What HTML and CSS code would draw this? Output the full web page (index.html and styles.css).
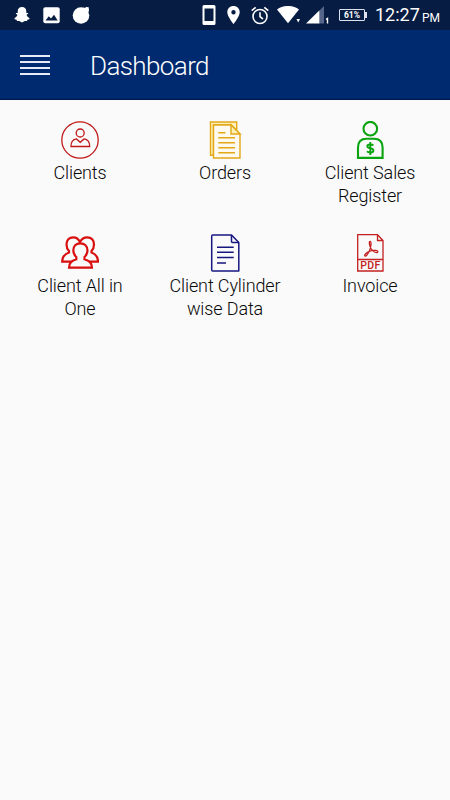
FILE: index.html
```
<!DOCTYPE html>
<html lang="en">
<head>
    <meta charset="UTF-8">
    <meta name="viewport" content="width=device-width, initial-scale=1.0">
    <title>Dashboard</title>
    <link rel="stylesheet" href="styles.css">
</head>
<body>

    <div class="status-bar">
        <div class="status-left">
            <svg width="16" height="16" viewBox="0 0 16 16" fill="#fff"><path d="M8 0C5.200 0 3.700 1.800 3.700 4.200V6L2 5.900L1.800 6.700L3.500 7.800C3 9.300 1.900 10.600 .4 11.200L.7 12.200L2.600 12.700L3 14L5.200 13.900L8 15.600L10.800 13.900L13 14L13.400 12.700L15.300 12.200L15.600 11.200C14.100 10.600 13 9.300 12.500 7.800L14.200 6.700L14 5.900L12.300 6V4.200C12.300 1.800 10.800 0 8 0Z"/></svg>
            <svg width="17" height="17" viewBox="0 0 17 17"><rect x=".3" y=".3" width="16.400" height="16" rx="2" fill="#fff"/><path d="M2.500 13.400L5.800 9.200L8 11.500L11 7.800L14.700 13.400Z" fill="#061c42"/></svg>
            <svg class="ball" width="18" height="18" viewBox="0 0 18 18" fill="#fff"><circle cx="9" cy="9.500" r="8.300"/><path d="M11 1.500L13 2L14 1L16.700 1.300L17 5L15.500 7Z"/></svg>
        </div>
        <div class="status-right">
            <svg width="14" height="20" viewBox="0 0 14 20"><path fill="#fff" fill-rule="evenodd" d="M2 0H12Q13.500 0 13.500 1.500V18.500Q13.500 20 12 20H2Q.5 20 .5 18.500V1.500Q.5 0 2 0ZM2.500 3.500V16H11.500V3.500Z"/></svg>
            <svg class="pin" width="13" height="18" viewBox="0 0 13 18"><path fill="#fff" fill-rule="evenodd" d="M6.500 0C2.900 0 .3 2.700 .3 6.200C.3 10.500 6.500 18 6.500 18S12.700 10.500 12.700 6.200C12.700 2.700 10.100 0 6.500 0ZM6.500 4A2.200 2.200 0 1 1 6.500 8.400A2.200 2.200 0 1 1 6.500 4Z"/></svg>
            <svg class="alarm" width="18" height="19" viewBox="0 0 18 19" fill="none" stroke="#fff" stroke-width="1.600"><circle cx="9" cy="10.500" r="7"/><path d="M9 6.300V10.700L12 13M.7 4.700L4.700 1.300M17.300 4.700L13.300 1.300"/></svg>
            <svg class="wifi" width="24" height="18" viewBox="0 0 24 18" fill="#fff"><path d="M0 3.500C6-1.200 16-1.200 22 3.500L11 17.300Z"/><path d="M19.500 13H23L21.200 16.500Z"/></svg>
            <svg class="signal" width="24" height="18" viewBox="0 0 24 18"><path d="M18 0V17.500H13V5Z" fill="#55658a"/><path d="M0 17.500L13.300 4.500V17.500Z" fill="#fff"/><path d="M20 13.300L21.500 12.500V17.500" fill="none" stroke="#fff" stroke-width="1.400"/></svg>
            <div class="battery">61%</div>
            <div class="time">12:27</div>
            <div class="meridiem">PM</div>
        </div>
    </div>

    <header class="toolbar">
        <div class="menu-btn">
            <span></span>
            <span></span>
            <span></span>
            <span></span>
        </div>
        <h1>Dashboard</h1>
    </header>

    <main class="menu-grid">
        <div class="menu-item">
            <svg width="38" height="38" viewBox="0 0 38 38" fill="none" stroke="#c01818" stroke-width="1.300">
                <circle cx="19" cy="19" r="18.200"/>
                <circle cx="19.200" cy="12" r="4"/>
                <path d="M10 25.500C10 20.500 12 18.300 15.500 17.900L19.200 21.300L23 17.900C26.500 18.300 28.700 20.500 28.700 25.500Z"/>
            </svg>
            <p>Clients</p>
        </div>

        <div class="menu-item">
            <svg width="38" height="38" viewBox="0 0 38 38" fill="none" stroke="#e2a816" stroke-width="1.400">
                <path d="M7.500 34.300H4.500V1H30.700V9.700L25 4H7.500Z" fill="#fff0b8"/>
                <path d="M7.500 4H25L34 13V37H7.500Z" fill="#fffaf0"/>
                <path d="M25 4V13H34Z" fill="#fff0b8"/>
                <path d="M12.300 11.700H19.500M12.300 16.700H29M12.300 21.700H29M12.300 26.700H29M12.300 31.700H29"/>
            </svg>
            <p>Orders</p>
        </div>

        <div class="menu-item">
            <svg width="38" height="38" viewBox="0 0 38 38" fill="none" stroke="#0aa40f" stroke-width="2.100">
                <circle cx="19.300" cy="7.700" r="6.800"/>
                <path d="M7 36.900V26.500C7 21 10 17.800 15.500 17.800H23C28.500 17.800 31.600 21 31.600 26.500V36.900Z"/>
                <path d="M22.300 24.500C21.500 23.300 16.300 22.800 16.300 25.300C16.300 28 22.400 26.500 22.400 29.500C22.400 32.300 17 31.900 16 30.300M19.300 21V34" stroke-width="1.900"/>
            </svg>
            <p>Client Sales Register</p>
        </div>

        <div class="menu-item">
            <svg width="38" height="38" viewBox="0 0 38 38" stroke="#d90f0f" stroke-width="2.200" fill="#fafafa">
                <path d="M12.300 3.300C8 3.300 5.500 6.300 5.500 10.500C5.500 13.500 6.500 15.500 8 17V18.500C4 20 1.200 22 1.200 27.700H19V8C17.500 5 15.500 3.300 12.300 3.300Z"/>
                <path d="M26.200 3.300C30.500 3.300 33 6.300 33 10.500C33 13.500 32 15.500 30.500 17V18.500C34.500 20 37 22 37 27.700H19V8C20.500 5 23 3.300 26.200 3.300Z"/>
                <path d="M19.300 9.300C15 9.300 12.300 12.300 12.300 16.500C12.300 19.700 13.600 21.500 15.300 23V25.300C10.800 26.600 8 28.500 8 33.700H31C31 28.500 28.200 26.600 23.500 25.300V23C25.200 21.500 26.500 19.700 26.500 16.500C26.500 12.300 23.600 9.300 19.300 9.300Z"/>
            </svg>
            <p>Client All in One</p>
        </div>

        <div class="menu-item">
            <svg width="38" height="38" viewBox="0 0 38 38" fill="none" stroke="#171782" stroke-width="1.500" stroke-linejoin="round">
                <path d="M6.700 .9H25.500L32.800 8.500V36.900H6.700Q5.700 36.900 5.700 35.900V1.900Q5.700 .9 6.700 .9Z"/>
                <path d="M25.500 .9V7.500Q25.500 8.500 26.500 8.500H32.800"/>
                <path d="M11 13.200H27.700M11 18.300H27.700M11 23.500H27.700M11 28.900H20"/>
            </svg>
            <p>Client Cylinder wise Data</p>
        </div>

        <div class="menu-item">
            <svg width="38" height="38" viewBox="0 0 38 38" fill="none" stroke="#c42020" stroke-width="1.300">
                <path d="M6.700 .7H26.500L32 6.500V37H6.700ZM26.500 .7V6.500H32M6.700 25.500H32"/>
                <path d="M19 7.500C17.800 7.700 18.300 11.500 20 14.500C21.500 17 23.500 18.500 25.800 18.600C27.300 18.300 27 16.600 25 16.400C21.500 16 17 17.500 14.600 19.800C12.800 21.800 14 23 15.500 21.500C17.500 19.200 19.700 14.500 20 10.500C20.100 8.300 19.700 7.300 19 7.500Z" stroke-width="1.300"/>
                <text class="pdf-label" x="9.300" y="34.900" textLength="20">PDF</text>
            </svg>
            <p>Invoice</p>
        </div>
    </main>

</body>
</html>
```

FILE: styles.css
```
body {
    font-family: Roboto, "Liberation Sans", sans-serif;
    margin: 0;
    padding: 0;
    background-color: #fafafa;
    color: #080808;
}

svg {
    display: block;
    flex: none;
}

/* Status Bar */
.status-bar {
    display: flex;
    justify-content: space-between;
    height: 30px;
    box-sizing: border-box;
    padding: 0 10px 0 14px;
    background-color: #061c42;
    color: #fff;
}

.status-left, .status-right {
    display: flex;
    align-items: center;
}

.status-left {
    gap: 13px;
}

.ball {
    margin-left: -1px;
}

.pin {
    margin-left: 11px;
}

.alarm {
    margin-left: 11px;
}

.wifi {
    margin-left: 8px;
}

.signal {
    margin-left: 5px;
}

.battery {
    position: relative;
    width: 26px;
    height: 12px;
    margin-left: 9px;
    box-sizing: border-box;
    border: 1px solid #dde2ee;
    border-radius: 1px;
    font-size: 8.5px;
    font-weight: bold;
    line-height: 10px;
    text-align: center;
}

.battery::after {
    content: "";
    position: absolute;
    top: 2px;
    right: -3px;
    width: 2px;
    height: 6px;
    background-color: #dde2ee;
}

.time {
    width: 44px;
    margin-left: 10px;
    font-size: 18px;
    line-height: 32px;
}

.meridiem {
    width: 18px;
    margin-left: 3px;
    padding-top: 5px;
    font-size: 12px;
}

/* Toolbar */
.toolbar {
    display: flex;
    height: 70px;
    box-sizing: border-box;
    padding-left: 20px;
    border-bottom: 1px solid #001848;
    background-color: #002a70;
    color: #fff;
}

.toolbar h1 {
    margin: 0 0 0 40px;
    font-size: 26px;
    font-weight: 300;
    letter-spacing: -0.6px;
    line-height: 72px;
}

.menu-btn {
    display: flex;
    flex-direction: column;
    gap: 4px;
    width: 30px;
    padding-top: 25px;
}

.menu-btn span {
    height: 2px;
    background-color: #e6ebf7;
}

/* Dashboard Menu */
.menu-grid {
    display: grid;
    grid-template-columns: repeat(3, 145px);
    justify-content: center;
    row-gap: 27px;
    padding-top: 21px;
}

.menu-item {
    display: flex;
    flex-direction: column;
    align-items: center;
}

.menu-item p {
    width: 120px;
    margin: 2px 0 0;
    font-size: 18px;
    font-weight: 300;
    letter-spacing: -0.12px;
    line-height: 23px;
    text-align: center;
}

.pdf-label {
    fill: #c42020;
    stroke: none;
    font-size: 10.5px;
    font-weight: 500;
}
```
